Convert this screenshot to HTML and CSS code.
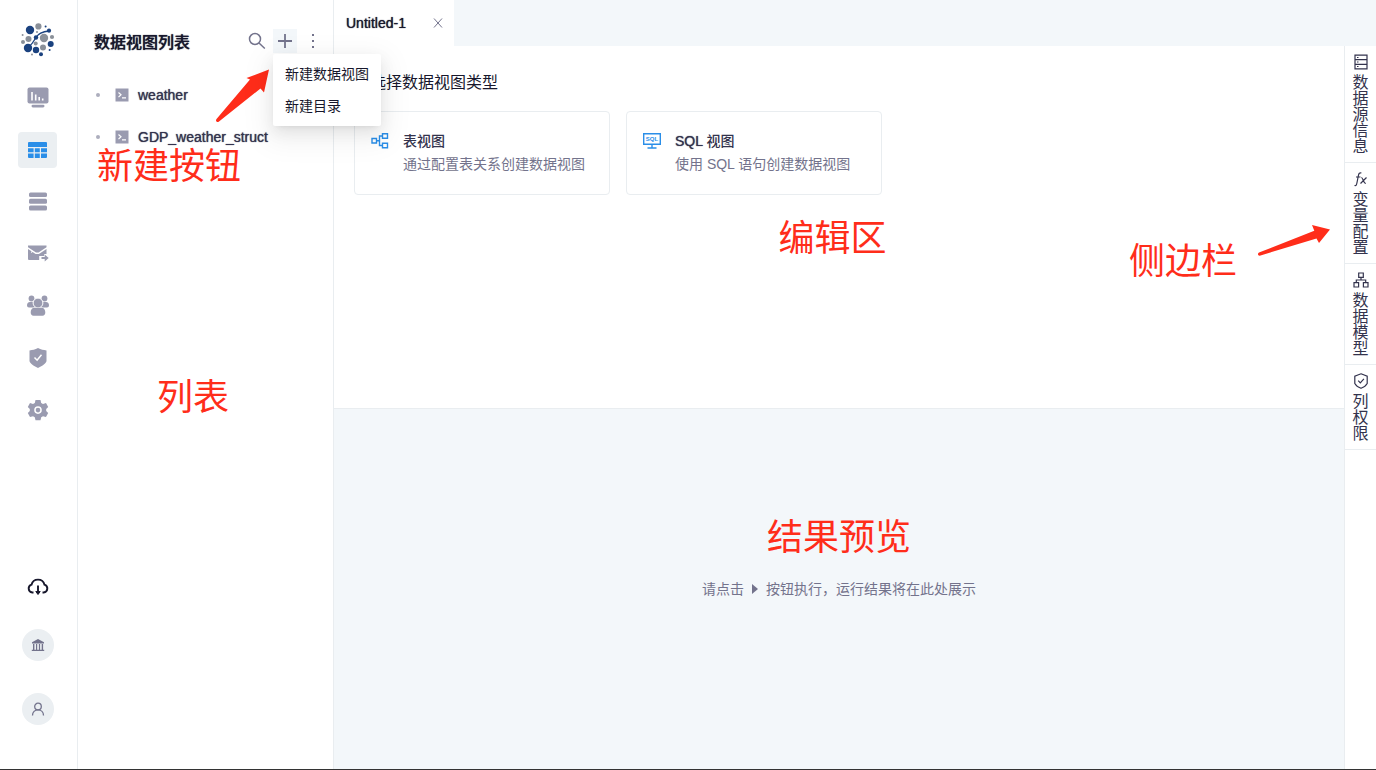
FILE: index.html
```html
<!DOCTYPE html>
<html lang="zh-CN">
<head>
<meta charset="utf-8">
<title>数据视图</title>
<link rel="stylesheet" href="styles.css">
</head>
<body>
<div class="app">
  <nav class="rail" aria-label="主导航">
    <svg class="logo" viewBox="0 0 34 34" width="34" height="34" aria-hidden="true">
      <path d="M7 27Q12 22 15 16.500T28 10" fill="none" stroke="#1b427f" stroke-width="1.300"/>
      <g fill="#1b427f"><circle cx="9" cy="9" r="4.200"/><circle cx="28" cy="9.700" r="2.100"/><circle cx="24.600" cy="5.400" r="1"/><circle cx="15" cy="16.500" r="2.200"/><circle cx="29.700" cy="23" r="3"/><circle cx="7" cy="27" r="4.200"/><circle cx="15" cy="29" r="3.200"/><circle cx="20" cy="33.200" r="2"/><circle cx="28.600" cy="29" r="1"/></g>
      <g fill="#8a9099"><circle cx="17.400" cy="5.400" r="3.100"/><circle cx="23" cy="17" r="4.200"/><circle cx="31" cy="16" r="2.100"/><circle cx="7.500" cy="18" r="3"/><circle cx="2" cy="21" r="2"/><circle cx="1.600" cy="14" r="1"/><circle cx="14.700" cy="22.500" r="2"/><circle cx="22" cy="26.500" r="3"/><circle cx="11" cy="33.500" r="1"/><circle cx="16" cy="11" r="1"/></g>
    </svg>
    <div class="rail-group">
      <button class="rail-item" aria-label="可视化"><svg viewBox="0 0 22 22" width="22" height="22"><rect x=".5" y=".5" width="21" height="16" rx="2"/><rect x="4.500" y="17.700" width="13" height="2.800" rx="1.400"/><path d="M5 5v8.500M8.700 7.500v6M12.200 10v3.500M15.700 11.500v2" stroke="#fff" stroke-width="1.600"/></svg></button>
      <button class="rail-item active" aria-label="数据视图"><svg viewBox="1 0 22 22" width="22" height="22"><path d="M2 4a1 1 0 0 1 1-1h17a1 1 0 0 1 1 1V8H2zM2 9.200h5.600v4H2zM8.800 9.200h5v4h-5zM15 9.200h6v4h-6zM2 14.400h5.600V19H3a1 1 0 0 1-1-1zM8.800 14.400h5V19h-5zM15 14.400h6V18a1 1 0 0 1-1 1h-5z"/></svg></button>
      <button class="rail-item" aria-label="数据源"><svg viewBox="0 0 22 22" width="22" height="22"><rect x="2" y="1.500" width="18" height="4.600" rx="1.500"/><rect x="2" y="7.800" width="18" height="5" rx="1.500"/><rect x="2" y="14.500" width="18" height="5" rx="1.500"/></svg></button>
      <button class="rail-item" aria-label="定时任务"><svg viewBox="0 1 22 22" width="22" height="22"><path d="M1 3.500h18.500v1.700l-8 5.300h-2.500L1 5.200zM1 7l3.500 2.300-.7 1.900 1.800-1.100 3 1.900h3.300l7.600-5v5h-2.300v2h-5V18H2a1 1 0 0 1-1-1z"/><path d="M14.500 14.900h3.200V12.400l4 3.600-4 3.600V17h-3.200z"/></svg></button>
      <button class="rail-item" aria-label="成员"><svg viewBox="0 0 22 22" width="22" height="22"><circle cx="4.500" cy="3.500" r="2.900"/><circle cx="17.500" cy="3.500" r="2.900"/><path d="M3 7h3.500L8 12l-2 .5H2a2 2 0 0 1-2-2C0 8.500 1 7 3 7zM19 7h-3.500L14 12l2 .5h4a2 2 0 0 0 2-2C22 8.500 21 7 19 7z"/><circle cx="11" cy="8" r="4.900" stroke="#fff"/><path d="M7.500 12.700h7c2.300 0 3.800 2 3.800 4.500 0 2.200-1 3.600-2.800 3.600h-9c-1.800 0-2.800-1.400-2.800-3.600 0-2.500 1.500-4.500 3.800-4.500z"/></svg></button>
      <button class="rail-item" aria-label="权限"><svg viewBox="0 0 22 22" width="22" height="22"><path d="M11 1c3 1.500 5.500 2 8.500 2.500V14c0 2-5 5.500-8.500 7-3.500-1.500-8.500-5-8.500-7V3.500C5.500 3 8 2.500 11 1z"/><path d="M7.500 10.500l2.600 2.700 4.400-5.400" fill="none" stroke="#fff" stroke-width="1.500"/></svg></button>
      <button class="rail-item" aria-label="设置"><svg viewBox="0 0 22 22" width="22" height="22"><path fill-rule="evenodd" d="M8.500 1h5l.7 3 1.800 1 3-.9 2.200 4-2 2v2l2 2-2.200 4-3-.9-1.800 1-.7 3h-5l-.7-3-1.800-1-3 .9-2.200-4 2-2v-2l-2-2 2.200-4 3 .9 1.800-1zM11 7.300a3.800 3.800 0 1 0 0 7.600 3.800 3.800 0 0 0 0-7.600z"/><circle cx="11" cy="11.100" r="2.300"/></svg></button>
    </div>
    <div class="rail-foot">
      <button class="download" aria-label="下载列表"><svg viewBox="0 0 22 20" width="22" height="20" fill="none" stroke="#17172c" stroke-width="1.900"><path d="M6.500 15.500H5.300A4 4 0 0 1 4.500 7.700 6.700 6.700 0 0 1 17.500 7.700 4 4 0 0 1 16.700 15.500h-1.200M11 8.500v8"/><path d="M8.800 14.500h4.400L11 17.500z" fill="#17172c" stroke-width="1"/></svg></button>
      <button class="round" aria-label="组织"><svg viewBox="0 0 14 14" width="14" height="14" fill="#73738c"><path d="M7 1l6 3.200V5.500H1V4.200zM2 6h1.400v6H2zM5 6h1.200v6H5zM7.900 6h1.200v6H7.900zM10.700 6h1.400v6h-1.400zM.8 11.800h12.400V13H.8z"/></svg></button>
      <button class="round" aria-label="用户"><svg viewBox="0 0 14 14" width="14" height="14" fill="none" stroke="#73738c" stroke-width="1.300"><circle cx="7" cy="4.500" r="3.300"/><path d="M1.500 13.500c0-3.300 2.300-5.700 5.500-5.700s5.500 2.400 5.500 5.700"/></svg></button>
    </div>
  </nav>

  <aside class="views">
    <header class="views-head">
      <h1>数据视图列表</h1>
      <button class="tool" aria-label="搜索"><svg viewBox="0 0 18 18" width="18" height="18"><circle cx="7" cy="7" r="5.500"/><path d="M11 11l5.800 5.500"/></svg></button>
      <div class="add">
        <button class="tool open" aria-label="新建" aria-expanded="true"><svg viewBox="0 0 18 18" width="18" height="18"><path d="M9 2v14M2 9h14" stroke-width="1.800"/></svg></button>
        <div class="menu" role="menu">
          <button role="menuitem">新建数据视图</button>
          <button role="menuitem">新建目录</button>
        </div>
      </div>
      <button class="tool" aria-label="更多"><svg viewBox="0 0 18 18" width="18" height="18"><path d="M8 2h2v2H8zM8 8h2v2H8zM8 14h2v2H8z" fill="#73738c" stroke="none"/></svg></button>
    </header>
    <ul class="tree">
      <li><a href="#weather"><i class="dot"></i><svg viewBox="0 0 14 14" width="14" height="14"><path d="M.5.500h13v13H.5z" fill="#9a9bb0"/><path d="M3.500 4.500l2.500 2.300-2.500 2.300M7 9.800h4" fill="none" stroke="#fff" stroke-width="1.200"/></svg>weather</a></li>
      <li><a href="#gdp"><i class="dot"></i><svg viewBox="0 0 14 14" width="14" height="14"><path d="M.5.500h13v13H.5z" fill="#9a9bb0"/><path d="M3.500 4.500l2.500 2.300-2.500 2.300M7 9.800h4" fill="none" stroke="#fff" stroke-width="1.200"/></svg>GDP_weather_struct</a></li>
    </ul>
    <span class="note note-button">新建按钮</span>
    <span class="note note-list">列表</span>
    <svg class="arrow arrow-button" viewBox="0 0 56 56" width="56" height="56" aria-hidden="true"><path d="M1.500 54.500Q.5 53.500 1.500 52L35 12.500 31.500 11 54 2.500 49 25.500 45.500 21.500 4 54.500Q2.500 55.500 1.500 54.500z"/></svg>
  </aside>

  <main class="work">
    <div class="tabs">
      <div class="tab"><span>Untitled-1</span><button class="close" aria-label="关闭"><svg viewBox="0 0 10 10" width="10" height="10"><path d="M1 .5l8 9M9 .5l-8 9"/></svg></button></div>
    </div>
    <div class="body">
      <div class="panes">
        <section class="editor">
          <h2>请选择数据视图类型</h2>
          <div class="cards">
            <button class="card">
              <svg viewBox="0 0 18 18" width="18" height="18"><path d="M1 6.500h4.500v4.500H1zM11.500 1.800h5v4.500h-5zM11.500 11.200h5v4.500h-5zM5.500 8.800H8.500M11.500 4H8.500v9.500h3"/></svg>
              <span class="card-text"><strong>表视图</strong><span>通过配置表关系创建数据视图</span></span>
            </button>
            <button class="card">
              <svg viewBox="0 0 18 18" width="18" height="18"><path d="M.7 1.700h16.600v10.600H.7zM9 12.300v3.500M4.500 16h9"/><text x="9" y="9.200" text-anchor="middle">SQL</text></svg>
              <span class="card-text"><strong><span class="latin">SQL</span> 视图</strong><span>使用 SQL 语句创建数据视图</span></span>
            </button>
          </div>
          <span class="note note-editor">编辑区</span>
          <span class="note note-side">侧边栏</span>
          <svg class="arrow arrow-side" viewBox="0 0 74 34" width="74" height="34" aria-hidden="true"><path d="M1.200 31Q.5 29.500 2 28.500L57.300 6.700 55 1 73 5.500 62 19 59.500 14.500 3.500 31.500Q2 32 1.200 31z"/></svg>
        </section>
        <section class="preview">
          <span class="preview-note">结果预览</span>
          <p>请点击<svg viewBox="0 0 6 10" width="6" height="10" aria-label="运行"><path d="M0 0l6 5-6 5z"/></svg>按钮执行，运行结果将在此处展示</p>
        </section>
      </div>
      <div class="side">
        <button><svg viewBox="0 0 16 16" width="16" height="16"><path d="M2 1.200h12v13.600H2zM2 5.700h12M2 10.300h12"/><path d="M4 3.500h1.500M4 8h1.500M4 12.500h1.500"/></svg><span>数据源信息</span></button>
        <button><svg viewBox="0 0 16 16" width="16" height="16"><path d="M1.500 14.500c1.700.5 2-.5 2.400-2.500l1.500-7.500c.4-2 1.200-3 3-2.500M3 6h4.500M7.500 12.500l6-6M8.300 6.500c1.800 0 2 6 4.500 6"/></svg><span>变量配置</span></button>
        <button><svg viewBox="0 0 16 16" width="16" height="16"><path d="M5.700 1h4.600v4.300H5.700zM1 10.700h4.600V15H1zM10.400 10.700H15V15h-4.600zM8 5.500V8M3.300 10.500V8h9.400v2.500"/></svg><span>数据模型</span></button>
        <button><svg viewBox="0 0 16 16" width="16" height="16"><path d="M8 .8l6.200 2.300v7.400C13 12.800 10.500 14.400 8 15.300 5.500 14.400 3 12.800 1.800 10.500V3.100zM5.200 7.600l2.100 2.200 3.600-4"/></svg><span>列权限</span></button>
      </div>
    </div>
  </main>
</div>
</body>
</html>
```
FILE: styles.css
```css
* { box-sizing: border-box; }

body {
  margin: 0;
  color: #17172c;
  background: #fff;
  font: 14px/22px "Liberation Sans", "Noto Sans CJK SC", sans-serif;
}

h1, h2, .note, .preview-note, .side span {
  font-family: "Noto Sans CJK SC", sans-serif;
}

button {
  margin: 0;
  padding: 0;
  border: 0;
  background: none;
  color: inherit;
  font: inherit;
  text-align: left;
  cursor: pointer;
}

svg { display: block; flex: none; }

.app {
  display: flex;
  height: 100vh;
  border-bottom: 1px solid #333;
}

.rail {
  display: flex;
  flex: none;
  flex-direction: column;
  align-items: center;
  width: 78px;
  padding: 21px 2px 44px 0;
  border-right: 1px solid #e9edf0;
}
.logo { overflow: visible; }
.rail-group {
  display: flex;
  flex-direction: column;
  gap: 16px;
  padding-top: 25px;
}
.rail-item {
  display: grid;
  place-items: center;
  width: 39px;
  height: 36px;
  border-radius: 4px;
  fill: #9a9bb0;
}
.rail-item.active { background: #ebeff2; fill: #2a8ee8; }
.rail-foot {
  display: flex;
  flex-direction: column;
  align-items: center;
  gap: 32px;
  margin-top: auto;
}
.round {
  display: grid;
  place-items: center;
  width: 32px;
  height: 32px;
  border-radius: 50%;
  background: #ebeff2;
}

.views {
  position: relative;
  flex: none;
  width: 256px;
  border-right: 1px solid #e9edf0;
}
.views-head {
  display: flex;
  align-items: center;
  gap: 4px;
  padding: 29px 8px 0 16px;
}
.views-head h1 {
  flex: 1;
  margin: 0;
  font-size: 16px;
  line-height: 24px;
  font-weight: 500;
}
.tool {
  display: grid;
  place-items: center;
  width: 24px;
  height: 24px;
  fill: none;
  stroke: #73738c;
  stroke-width: 1.5;
}
.tool.open { background: #f3f7fa; }
.add { position: relative; }
.menu {
  position: absolute;
  z-index: 5;
  top: 25px;
  left: 0;
  display: flex;
  flex-direction: column;
  padding: 4px 0;
  border-radius: 2px;
  background: #fff;
  box-shadow: 0 3px 6px -4px rgba(0, 0, 0, .12), 0 6px 16px rgba(0, 0, 0, .08), 0 9px 28px 8px rgba(0, 0, 0, .05);
}
.menu button { padding: 5px 12px; white-space: nowrap; }

.tree { margin: 0; padding: 21px 0 0; list-style: none; }
.tree a {
  display: flex;
  align-items: center;
  height: 42px;
  padding-left: 18px;
  color: #33334d;
  text-decoration: none;
}
.tree a, .tab, h1, .latin { text-shadow: 0 0 1px currentColor; }
.tree svg { margin: 0 9px 0 15px; }
.dot { width: 4px; height: 4px; border-radius: 50%; background: #adaebd; }

.note, .preview-note {
  color: #ff2d1a;
  font-size: 36px;
  line-height: 44px;
  white-space: nowrap;
}
.note { position: absolute; }
.note-button { top: 141px; left: 19px; }
.note-list { top: 372px; left: 79px; }
.note-editor { top: 167px; left: 44%; }
.note-side { top: 190px; right: 107px; }
.arrow { position: absolute; fill: #ff2d1a; }
.arrow-button { top: 67px; left: 137px; }
.arrow-side { top: 178px; right: 13px; }

.work {
  display: flex;
  flex: 1;
  flex-direction: column;
  min-width: 0;
}
.tabs { display: flex; background: #f3f7fa; }
.tab {
  display: flex;
  align-items: center;
  justify-content: space-between;
  width: 120px;
  height: 46px;
  padding: 0 11px 0 12px;
  background: #fff;
}
.close { stroke: #73738c; }
.body { display: flex; flex: 1; min-height: 0; }
.panes {
  display: grid;
  flex: 1;
  grid-template-rows: 1fr 1fr;
  min-width: 0;
}
.editor {
  position: relative;
  padding: 23px 20px;
}
.editor h2 {
  margin: 0 0 18px;
  font-size: 16px;
  line-height: 24px;
  font-weight: 400;
}
.cards { display: flex; gap: 16px; }
.card {
  display: flex;
  gap: 14px;
  width: 256px;
  height: 84px;
  padding: 18px 16px;
  border: 1px solid #e9edf0;
  border-radius: 4px;
}
.card svg {
  margin-top: 2px;
  fill: none;
  stroke: #2a8ee8;
  stroke-width: 1.4;
}
.card text {
  fill: #2a8ee8;
  stroke: none;
  font-size: 6px;
  font-weight: 700;
}
.card-text {
  display: flex;
  flex-direction: column;
  gap: 1px;
  color: #73738c;
}
.card strong { color: #33334d; font-weight: 500; }

.preview {
  display: flex;
  flex-direction: column;
  align-items: center;
  padding-top: 103px;
  border-top: 1px solid #e9edf0;
  background: #f3f7fa;
}
.preview p {
  display: flex;
  align-items: center;
  margin: 22px 0 0;
  color: #73738c;
}
.preview p svg { margin: 0 8px; fill: #73738c; }

.side {
  flex: none;
  width: 32px;
  border-left: 1px solid #e9edf0;
  color: #33334d;
}
.side button {
  display: flex;
  flex-direction: column;
  align-items: center;
  gap: 3px;
  width: 100%;
  padding: 8px 0 9px;
  border-bottom: 1px solid #e9edf0;
}
.side svg { fill: none; stroke: #33334d; stroke-width: 1.2; }
.side span {
  width: 16px;
  font-size: 16px;
  line-height: 16px;
}
```
